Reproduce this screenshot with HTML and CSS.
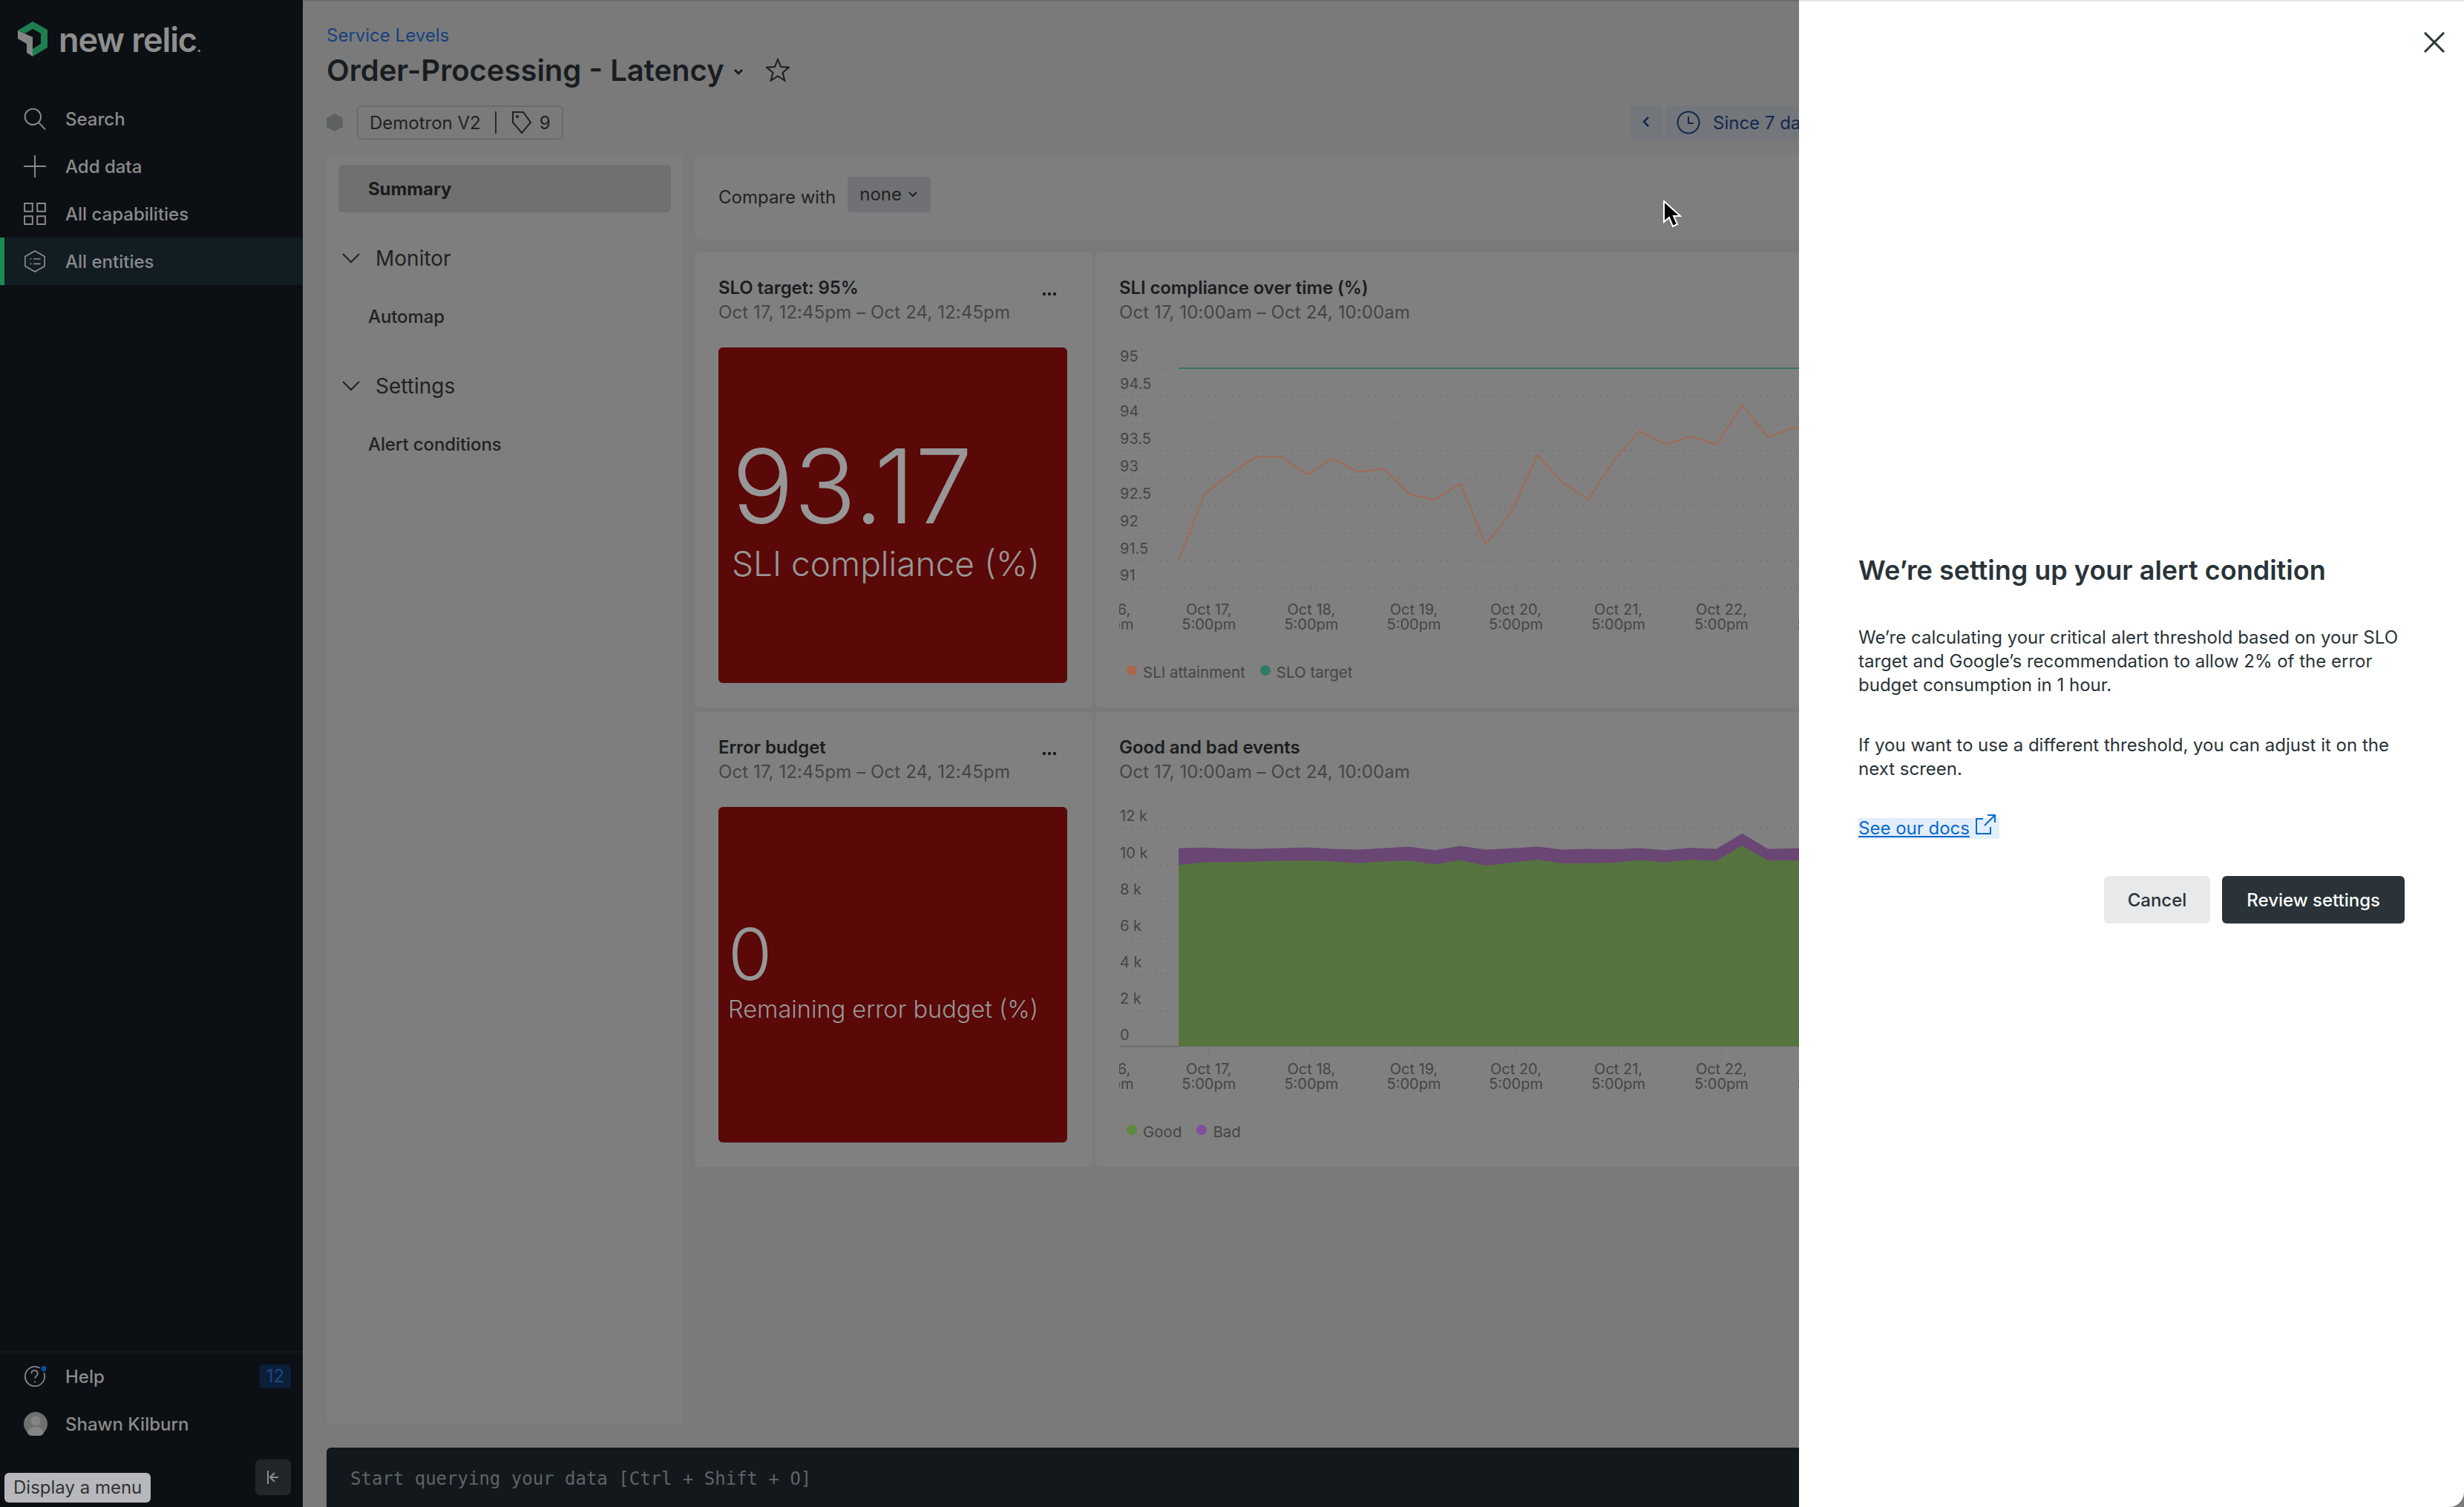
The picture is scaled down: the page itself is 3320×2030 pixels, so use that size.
FILE: index.html
```html
<!DOCTYPE html>
<html>
<head>
  <title>Order-Processing - Latency</title>
  <link rel="stylesheet" href="styles.css">
</head>
<body>
  <div class="app">
    <aside class="sidebar">
      <div class="logo">
        <svg class="logo-mark" width="44" height="50" viewBox="24 32 42 50">
          <path fill="#1d7f4e" d="M24 45 44 33 64 44V68L44 80V70L55 63V49L44 43 34 49Z"/>
          <path fill="#858585" d="M24 45V56L36 63V75L44 80V54Z"/>
        </svg>
        <span class="logo-text">new relic<small>.</small></span>
      </div>
      <nav>
        <a class="nav-row">
          <svg class="nav-icon" viewBox="0 0 28 28"><circle cx="11.500" cy="11.500" r="10"/><path d="M19 19l8 8.500"/></svg>
          <span>Search</span>
        </a>
        <a class="nav-row">
          <svg class="nav-icon" viewBox="0 0 28 28"><path d="M14 0v28M0 14h28"/></svg>
          <span>Add data</span>
        </a>
        <a class="nav-row">
          <svg class="nav-icon" viewBox="0 0 28 28"><path d="M1 1h10v10H1zM17 1h10v10H17zM1 17h10v10H1zM17 17h10v10H17z"/></svg>
          <span>All capabilities</span>
        </a>
        <a class="nav-row active">
          <svg class="nav-icon" viewBox="0 0 30 32"><path d="M15 1l14 8v14l-14 8-14-8V9zM8 12.500h2M13 12.500h10M8 19.500h2M13 19.500h10"/></svg>
          <span>All entities</span>
        </a>
      </nav>
      <div class="side-bottom">
        <a class="nav-row">
          <svg class="nav-icon" viewBox="0 0 32 30"><path d="M23 3a14 14 0 1 0 6 7M11 11c0-6 9-6 9 0 0 3-4 4-4 7M16 22v2"/><circle class="note-dot" cx="29" cy="4" r="4"/></svg>
          <span>Help</span>
          <b class="badge">12</b>
        </a>
        <a class="nav-row">
          <svg class="avatar" width="32" height="32" viewBox="0 0 32 32">
            <circle cx="16" cy="16" r="16" fill="#6f6f6f"/>
            <circle cx="16" cy="12" r="6.500" fill="#858585"/>
            <path fill="#858585" d="M5 29c1-7 6-9 11-9s10 2 11 9a16 16 0 0 1-22 0z"/>
          </svg>
          <span>Shawn Kilburn</span>
        </a>
        <div class="side-foot">
          <button class="collapse">
            <svg width="20" height="24" viewBox="0 0 20 24"><path d="M3 3v18M17 12H7M12 6l-6 6 6 6"/></svg>
          </button>
        </div>
      </div>
    </aside>

    <main class="main">
      <a class="crumb">Service Levels</a>
      <div class="title-row">
        <h1>Order-Processing - Latency</h1>
        <svg class="title-chev" width="14" height="10" viewBox="0 0 14 10"><path d="M2 2l5 5 5-5"/></svg>
        <svg class="star" width="32" height="32" viewBox="0 0 32 32"><path d="M16 2l4 10 11 .8-8.500 7 2.800 10.700L16 24.500 6.700 30.500 9.500 19.800 1 12.800 12 12z"/></svg>
      </div>
      <div class="meta-row">
        <svg width="22" height="24" viewBox="0 0 22 24"><path fill="#5d6162" d="M11 0l11 6v12l-11 6L0 18V6z"/></svg>
        <div class="tag-box">
          <span>Demotron V2</span>
          <i class="tag-sep"></i>
          <svg class="tag-icon" width="28" height="32" viewBox="0 0 28 32"><path d="M2 2h14l10 14-12 14L2 16z"/><circle cx="8" cy="8" r="1"/></svg>
          <span>9</span>
        </div>
        <div class="picker">
          <button class="picker-prev">
            <svg width="12" height="16" viewBox="0 0 12 16"><path d="M9 2L3 8l6 6"/></svg>
          </button>
          <div class="picker-range">
            <svg width="32" height="32" viewBox="0 0 32 32"><circle cx="16" cy="16" r="14.500"/><path d="M16 8v9h7"/></svg>
            <span>Since 7 days ago</span>
          </div>
        </div>
      </div>

      <div class="content">
        <div class="left-nav">
          <a class="left-item selected">Summary</a>
          <div class="left-head">
            <svg width="24" height="14" viewBox="0 0 24 14"><path d="M1 1l11 11L23 1"/></svg>
            <span>Monitor</span>
          </div>
          <a class="left-item">Automap</a>
          <div class="left-head">
            <svg width="24" height="14" viewBox="0 0 24 14"><path d="M1 1l11 11L23 1"/></svg>
            <span>Settings</span>
          </div>
          <a class="left-item">Alert conditions</a>
        </div>

        <div class="dash">
          <div class="compare">
            <span>Compare with</span>
            <div class="compare-select">
              <span>none</span>
              <svg width="14" height="10" viewBox="0 0 14 10"><path d="M2 2l5 5 5-5"/></svg>
            </div>
          </div>
          <div class="grid">
            <section class="card">
              <div class="card-head">
                <div>
                  <h3>SLO target: 95%</h3>
                  <p>Oct 17, 12:45pm – Oct 24, 12:45pm</p>
                </div>
                <svg class="dots" width="20" height="6" viewBox="0 0 20 6"><circle cx="3" cy="3" r="2.200"/><circle cx="10" cy="3" r="2.200"/><circle cx="17" cy="3" r="2.200"/></svg>
              </div>
              <div class="tile tile-big">
                <div class="tile-num">93.17</div>
                <div class="tile-label">SLI compliance (%)</div>
              </div>
            </section>

            <section class="card chart-card">
              <div class="card-head">
                <div>
                  <h3>SLI compliance over time (%)</h3>
                  <p>Oct 17, 10:00am – Oct 24, 10:00am</p>
                </div>
              </div>
              <svg class="chart" width="1000" height="420">
                <g class="grid-lines">
                  <path d="M0 65H1000M0 103H1000M0 139H1000M0 176H1000M0 213H1000M0 251H1000M0 287H1000M0 323.500H1000M0 28H80"/>
                </g>
                <path class="ticks" d="M120.800 324v10M258.900 324v10M397 324v10M534.500 324v10M672.600 324v10M811.400 324v10"/>
                <g class="axis">
                  <text x="1" y="19">95</text><text x="1" y="56">94.5</text><text x="1" y="93">94</text>
                  <text x="1" y="130">93.5</text><text x="1" y="167">93</text><text x="1" y="204">92.5</text>
                  <text x="1" y="241">92</text><text x="1" y="278">91.5</text><text x="1" y="314">91</text>
                </g>
                <g class="axis mid">
                  <text x="-17" y="360">Oct 16,</text><text x="-17" y="380">5:00pm</text>
                  <text x="120.800" y="360">Oct 17,</text><text x="120.800" y="380">5:00pm</text>
                  <text x="258.900" y="360">Oct 18,</text><text x="258.900" y="380">5:00pm</text>
                  <text x="397" y="360">Oct 19,</text><text x="397" y="380">5:00pm</text>
                  <text x="534.500" y="360">Oct 20,</text><text x="534.500" y="380">5:00pm</text>
                  <text x="672.600" y="360">Oct 21,</text><text x="672.600" y="380">5:00pm</text>
                  <text x="811.400" y="360">Oct 22,</text><text x="811.400" y="380">5:00pm</text>
                  <text x="950" y="360">Oct 23,</text><text x="950" y="380">5:00pm</text>
                </g>
                <path class="target-line" d="M80 28H1000"/>
                <polyline class="sli-line" points="80.100,287.400 115.100,197.400 149.500,170.600 183.900,147.400 218.900,147.400 253.300,171.300 287.600,149.900 322,168.100 356.400,163.400 390.800,197.400 425.100,205.200 459.500,183.400 493.900,265.200 528.300,222.400 563.300,144.900 597.600,182 632,204.900 666.400,152.700 700.800,112.400 735.800,130.600 770.100,119.900 804.500,130.600 839.500,77.700 873.900,120.900 908.300,107.700 942.800,120 977,110"/>
              </svg>
              <div class="legend">
                <i class="dot dot-sli"></i><span>SLI attainment</span>
                <i class="dot dot-slo"></i><span>SLO target</span>
              </div>
            </section>

            <section class="card">
              <div class="card-head">
                <div>
                  <h3>Error budget</h3>
                  <p>Oct 17, 12:45pm – Oct 24, 12:45pm</p>
                </div>
                <svg class="dots" width="20" height="6" viewBox="0 0 20 6"><circle cx="3" cy="3" r="2.200"/><circle cx="10" cy="3" r="2.200"/><circle cx="17" cy="3" r="2.200"/></svg>
              </div>
              <div class="tile tile-small">
                <div class="tile-num">0</div>
                <div class="tile-label">Remaining error budget (%)</div>
              </div>
            </section>

            <section class="card chart-card">
              <div class="card-head">
                <div>
                  <h3>Good and bad events</h3>
                  <p>Oct 17, 10:00am – Oct 24, 10:00am</p>
                </div>
              </div>
              <svg class="chart" width="1000" height="420">
                <g class="grid-lines">
                  <path d="M0 29H1000M0 78.600H80M0 127H80M0 177H80M0 225H80M0 275H80"/>
                </g>
                <path class="baseline" d="M0 322.600H80"/>
                <path class="ticks" d="M120.800 324v10M258.900 324v10M397 324v10M534.500 324v10M672.600 324v10M811.400 324v10"/>
                <g class="axis">
                  <text x="1" y="19">12 k</text><text x="1" y="69">10 k</text><text x="1" y="118">8 k</text>
                  <text x="1" y="167">6 k</text><text x="1" y="216">4 k</text><text x="1" y="265">2 k</text>
                  <text x="1" y="314">0</text>
                </g>
                <g class="axis mid">
                  <text x="-17" y="360">Oct 16,</text><text x="-17" y="380">5:00pm</text>
                  <text x="120.800" y="360">Oct 17,</text><text x="120.800" y="380">5:00pm</text>
                  <text x="258.900" y="360">Oct 18,</text><text x="258.900" y="380">5:00pm</text>
                  <text x="397" y="360">Oct 19,</text><text x="397" y="380">5:00pm</text>
                  <text x="534.500" y="360">Oct 20,</text><text x="534.500" y="380">5:00pm</text>
                  <text x="672.600" y="360">Oct 21,</text><text x="672.600" y="380">5:00pm</text>
                  <text x="811.400" y="360">Oct 22,</text><text x="811.400" y="380">5:00pm</text>
                  <text x="950" y="360">Oct 23,</text><text x="950" y="380">5:00pm</text>
                </g>
                <polygon class="area-bad" points="80.100,55.400 115.100,54.700 149.500,56.100 183.900,56.500 218.900,55.400 253.300,54.400 287.600,56.500 322,57.600 356.400,55.400 390.800,53.600 425.100,58.300 459.500,52.600 493.900,57.600 528.300,55.800 563.300,53.600 597.600,57.600 632,56.500 666.400,56.900 700.800,55.400 735.800,58.300 770.100,55.100 804.500,56.500 839.500,35.800 873.900,56.500 908.300,55.800 1000,55.800 1000,322.600 80.100,322.600"/>
                <polygon class="area-good" points="80.100,78.300 115.100,74.400 149.500,74.400 183.900,73.600 218.900,72.600 253.300,72.200 287.600,73.300 322,75.800 356.400,73.300 390.800,72.600 425.100,77.200 459.500,71.500 493.900,79 528.300,75.100 563.300,71.100 597.600,76.100 632,75.800 666.400,75.100 700.800,71.500 735.800,74.400 770.100,71.100 804.500,72.600 839.500,51.900 873.900,71.900 908.300,71.900 1000,71.900 1000,322.600 80.100,322.600"/>
              </svg>
              <div class="legend">
                <i class="dot dot-good"></i><span>Good</span>
                <i class="dot dot-bad"></i><span>Bad</span>
              </div>
            </section>
          </div>
        </div>
      </div>

      <div class="query-bar">Start querying your data [Ctrl + Shift + O]</div>
    </main>

    <div class="drawer">
      <button class="drawer-close">
        <svg width="28" height="28" viewBox="0 0 28 28"><path d="M1 1l26 26M27 1L1 27"/></svg>
      </button>
      <h2>We’re setting up your alert condition</h2>
      <p>We’re calculating your critical alert threshold based on your SLO target and Google’s recommendation to allow 2% of the error budget consumption in 1 hour.</p>
      <p>If you want to use a different threshold, you can adjust it on the next screen.</p>
      <div class="docs-row">
        <a class="docs-link"><u>See our docs</u>
          <svg width="28" height="28" viewBox="0 0 28 28"><path d="M11 6H2v20h19v-9M13 15L27 1M17 1h10v10"/></svg>
        </a>
      </div>
      <div class="drawer-actions">
        <button class="btn btn-plain">Cancel</button>
        <button class="btn btn-dark">Review settings</button>
      </div>
    </div>

    <div class="menu-tip">Display a menu</div>
    <svg class="cursor" width="26" height="38" viewBox="0 0 26 38"><path d="M2 1v28l7-6 5 12 6-3-5-11h9z"/></svg>
  </div>
</body>
</html>
```

FILE: styles.css
```css
body {
  margin: 0;
  background-color: #3b0aa6;
  font-family: Inter, "Liberation Sans", sans-serif;
  font-size: 24px;
  color: #222;
}

.app {
  position: relative;
  display: flex;
  width: 3320px;
  height: 2030px;
  overflow: hidden;
}

/* sidebar */
.sidebar {
  display: flex;
  flex-direction: column;
  width: 408px;
  flex-shrink: 0;
  background-color: #0c1014;
  color: #8b8b8b;
}

.logo {
  display: flex;
  align-items: center;
  gap: 12px;
  height: 128px;
  padding: 0 0 22px 23px;
  box-sizing: border-box;
}

.logo-text {
  font-size: 45px;
  font-weight: 600;
  letter-spacing: -1.100px;
  color: #8f8f8f;
}

.logo-text small {
  font-size: 20px;
}

.nav-row {
  display: flex;
  align-items: center;
  height: 64px;
  padding-left: 32px;
  font-weight: 500;
}

.nav-row.active {
  background-color: #111c23;
  box-shadow: inset 6px 0 0 #1d8a52;
}

.nav-icon {
  width: 30px;
  height: 30px;
  margin-right: 26px;
  fill: none;
  stroke: #8b8b8b;
  stroke-width: 1.800;
}

.note-dot {
  fill: #0a4f9e;
  stroke: none;
}

.side-bottom {
  margin-top: auto;
  border-top: 2px solid #14191e;
}

.badge {
  margin-left: auto;
  margin-right: 16px;
  width: 42px;
  height: 32px;
  line-height: 32px;
  text-align: center;
  font-weight: 400;
  color: #1d4a86;
  background-color: #0b1f38;
  border-radius: 4px;
}

.avatar {
  margin-right: 24px;
}

.side-foot {
  display: flex;
  justify-content: flex-end;
  height: 80px;
  padding: 16px;
  box-sizing: border-box;
}

.collapse {
  width: 48px;
  height: 48px;
  padding: 0;
  border: none;
  border-radius: 6px;
  background-color: #22262b;
}

.collapse svg {
  display: block;
  margin: 0 auto;
  fill: none;
  stroke: #8b8b8b;
  stroke-width: 2;
}

/* main */
.main {
  display: flex;
  flex-direction: column;
  flex: 1;
  min-width: 0;
  padding: 32px 32px 0;
  background-color: #7a7a7a;
  border-top: 2px solid #6c6c6c;
  box-sizing: border-box;
}

.crumb {
  height: 30px;
  line-height: 28px;
  color: #17427f;
}

.title-row {
  display: flex;
  align-items: center;
  height: 48px;
  margin-top: 6px;
}

h1 {
  margin: 0;
  font-size: 40px;
  font-weight: 600;
  color: #191d20;
}

.title-chev {
  margin: 6px 0 0 12px;
  fill: none;
  stroke: #191d20;
  stroke-width: 3;
}

.star {
  margin-left: 30px;
  fill: none;
  stroke: #191d20;
  stroke-width: 2;
}

.meta-row {
  display: flex;
  align-items: center;
  gap: 19px;
  height: 48px;
  margin-top: 23px;
}

.tag-box {
  display: flex;
  align-items: center;
  width: 278px;
  height: 46px;
  padding-left: 15px;
  box-sizing: border-box;
  border: 2px solid #6b6b6b;
  border-radius: 6px;
}

.tag-sep {
  width: 2px;
  height: 30px;
  margin: 0 20px 0 19px;
  background-color: #2a2a2a;
}

.tag-icon {
  margin-right: 10px;
  fill: none;
  stroke: #222;
  stroke-width: 2;
}

.picker {
  display: flex;
  gap: 4px;
  width: 1092px;
  margin-left: auto;
}

.picker-prev {
  width: 44px;
  height: 46px;
  padding: 0;
  border: none;
  border-radius: 4px 0 0 4px;
  background-color: #73767b;
}

.picker-prev svg {
  fill: none;
  stroke: #12294d;
  stroke-width: 2.500;
}

.picker-range {
  display: flex;
  align-items: center;
  gap: 17px;
  flex: 1;
  height: 46px;
  padding-left: 15px;
  color: #12294d;
  background-color: #73767b;
}

.picker-range svg {
  fill: none;
  stroke: #12294d;
  stroke-width: 2;
}

.content {
  display: flex;
  gap: 16px;
  height: 1711px;
  margin-top: 18px;
  flex-shrink: 0;
}

.left-nav {
  width: 480px;
  flex-shrink: 0;
  padding: 15px 16px;
  box-sizing: border-box;
  background-color: #7e7e7e;
  border-radius: 6px;
}

.left-item {
  display: flex;
  align-items: center;
  height: 64px;
  padding-left: 40px;
  font-weight: 500;
  letter-spacing: -0.100px;
  color: #222;
  border-radius: 6px;
}

.left-item.selected {
  font-weight: 700;
  color: #1b1b1b;
  background-color: #707070;
}

.left-head {
  display: flex;
  align-items: center;
  gap: 21px;
  height: 64px;
  margin-top: 30px;
  padding-left: 5px;
  font-size: 28px;
  color: #222;
}

.left-item + .left-head {
  margin-top: 30px;
}

.left-head svg {
  fill: none;
  stroke: #222;
  stroke-width: 2;
}

.left-head + .left-item {
  margin-top: 14px;
}

.dash {
  flex: 1;
  min-width: 0;
}

.compare {
  display: flex;
  align-items: center;
  gap: 16px;
  height: 115px;
  padding: 0 0 6px 32px;
  box-sizing: border-box;
  background-color: #7e7e7e;
  border-radius: 6px;
}

.compare > span {
  margin-top: 8px;
}

.compare-select {
  display: flex;
  align-items: center;
  gap: 8px;
  height: 48px;
  padding: 0 17px 0 16px;
  background-color: #6f7175;
  border-radius: 4px;
}

.compare-select svg {
  fill: none;
  stroke: #222;
  stroke-width: 2;
}

.grid {
  display: grid;
  grid-template-columns: 536px 1400px;
  grid-auto-rows: 613px;
  gap: 6px 4px;
  margin-top: 18px;
}

.card {
  padding: 32px 32px 0;
  box-sizing: border-box;
  background-color: #808080;
  border-radius: 6px;
}

.card-head {
  display: flex;
  justify-content: space-between;
  height: 96px;
}

h3 {
  margin: 0;
  font-size: 24px;
  line-height: 32px;
  font-weight: 600;
  letter-spacing: -0.100px;
  color: #1b1d1f;
}

.card-head p {
  margin: 0;
  line-height: 33px;
  letter-spacing: 0.100px;
  color: #454545;
}

.dots {
  margin: 21px 16px 0 0;
  fill: #1d1d1d;
}

.tile {
  display: flex;
  flex-direction: column;
  width: 470px;
  height: 452px;
  box-sizing: border-box;
  color: #979797;
  background-color: #5a0808;
  border-radius: 6px;
}

.tile-big {
  padding: 117px 0 0 18px;
}

.tile-big .tile-num {
  font-size: 139px;
  line-height: 140px;
  font-weight: 300;
}

.tile-big .tile-label {
  font-size: 46px;
  line-height: 68px;
  font-weight: 300;
}

.tile-small {
  padding: 148px 0 0 13px;
}

.tile-small .tile-num {
  font-size: 96px;
  line-height: 100px;
  font-weight: 300;
}

.tile-small .tile-label {
  font-size: 32.500px;
  line-height: 50px;
  font-weight: 300;
}

.chart {
  display: block;
}

.grid-lines path {
  fill: none;
  stroke: #747474;
  stroke-width: 2;
  stroke-dasharray: 2 6;
}

.ticks {
  fill: none;
  stroke: #767676;
  stroke-width: 1;
}

.baseline {
  stroke: #6c6c6c;
  stroke-width: 2;
}

.axis {
  font-size: 20px;
  fill: #454545;
}

.axis.mid {
  text-anchor: middle;
}

.target-line {
  fill: none;
  stroke: #3a7462;
  stroke-width: 2;
}

.sli-line {
  fill: none;
  stroke: #a06a52;
  stroke-width: 2;
}

.area-bad {
  fill: #694673;
}

.area-good {
  fill: #55743f;
}

.legend {
  display: flex;
  align-items: center;
  height: 34px;
  padding-left: 10px;
  font-size: 20.500px;
  color: #454545;
}

.dot {
  width: 14px;
  height: 14px;
  margin-right: 8px;
  margin-bottom: 4px;
  border-radius: 50%;
}

.legend span {
  margin-right: 20px;
}

.dot-sli { background-color: #a8664c; }
.dot-slo { background-color: #2f7a66; }
.dot-good { background-color: #5c8a3e; }
.dot-bad { background-color: #7f4f9a; }

.query-bar {
  height: 80px;
  margin-top: 32px;
  flex-shrink: 0;
  padding: 28px 32px 0;
  box-sizing: border-box;
  font-family: "DejaVu Sans Mono", "Liberation Mono", monospace;
  color: #5f6366;
  background-color: #13181c;
  border-radius: 6px 6px 0 0;
}

/* drawer over the page */
.drawer {
  position: absolute;
  top: 0;
  bottom: 0;
  left: 2424px;
  right: 0;
  display: flex;
  flex-direction: column;
  padding: 0 80px 0 80px;
  box-sizing: border-box;
  background-color: #fff;
  border-top: 2px solid #e5e5e5;
  border-bottom-right-radius: 20px;
  color: #293338;
}

.drawer-close {
  position: absolute;
  top: 41px;
  right: 26px;
  padding: 0;
  border: none;
  background: none;
}

.drawer-close svg {
  display: block;
  fill: none;
  stroke: #293338;
  stroke-width: 3;
}

.drawer h2 {
  margin: 742px 0 51px;
  font-size: 36px;
  line-height: 48px;
  font-weight: 600;
}

.drawer p {
  margin: 0 0 49px;
  font-size: 24px;
  line-height: 32px;
}

.docs-row {
  display: flex;
  height: 34px;
  margin-top: -4px;
}

.docs-link {
  display: flex;
  align-items: flex-end;
  gap: 7px;
  height: 28px;
  margin-top: 5px;
  padding-right: 5px;
  color: #0b6acb;
  background-color: #e3eefb;
}

.docs-link svg {
  margin-bottom: 5px;
  fill: none;
  stroke: #0b6acb;
  stroke-width: 2;
}

.drawer-actions {
  display: flex;
  justify-content: flex-end;
  gap: 16px;
  margin-top: 49px;
}

.btn {
  height: 64px;
  padding: 0 32px;
  font-family: inherit;
  font-size: 24px;
  font-weight: 500;
  border: none;
  border-radius: 6px;
}

.btn-plain {
  color: #293338;
  background-color: #e7e9ea;
}

.btn-dark {
  padding: 0 33px;
  color: #fff;
  background-color: #293338;
}

.menu-tip {
  position: absolute;
  left: 6px;
  bottom: 6px;
  height: 40px;
  padding: 0 12px;
  line-height: 40px;
  color: #333;
  background-color: #b6b8bc;
  border-radius: 6px;
}

.cursor {
  position: absolute;
  left: 2240px;
  top: 270px;
  fill: #000;
  stroke: #fff;
  stroke-width: 2;
}
```
